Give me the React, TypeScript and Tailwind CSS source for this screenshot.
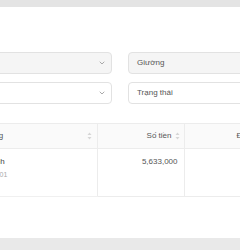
import React from "react";

const Chevron = () => (
  <svg width="6" height="4" viewBox="0 0 6 4" fill="none" className="shrink-0">
    <path d="M1 1l2 2 2-2" stroke="#a0a0a0" strokeWidth="0.9" strokeLinecap="round" strokeLinejoin="round" />
  </svg>
);

const Sort = () => (
  <svg width="5" height="8" viewBox="0 0 5 8" className="shrink-0">
    <path d="M2.5 0.5L4.5 3H0.5Z" fill="#d6d6d6" />
    <path d="M2.5 7.5L0.5 5H4.5Z" fill="#d6d6d6" />
  </svg>
);

export default function App() {
  return (
    <div
      className="w-[240px] h-[250px] overflow-hidden bg-white flex flex-col text-[8px] text-[#555]"
      style={{ fontFamily: '"Liberation Sans", Arial, sans-serif' }}
    >
      <div className="h-[7px] bg-[#e4e4e4] shrink-0" />
      <div className="flex-1 flex flex-col ml-[-80px] w-[400px]">
        <div className="mt-[45px] grid grid-cols-2 gap-x-4 gap-y-2">
          <div className="h-[22px] rounded-[4px] border border-[#e2e2e2] bg-[#f5f5f5] flex items-center justify-end pr-[6px]">
            <Chevron />
          </div>
          <div className="h-[22px] rounded-[4px] border border-[#e2e2e2] bg-[#f5f5f5] flex items-center px-[8px]">
            <span>Giường</span>
          </div>
          <div className="h-[22px] rounded-[4px] border border-[#e2e2e2] bg-white flex items-center justify-end pr-[6px]">
            <Chevron />
          </div>
          <div className="h-[22px] rounded-[4px] border border-[#e2e2e2] bg-white flex items-center px-[8px]">
            <span>Trạng thái</span>
          </div>
        </div>
        <table className="mt-[19px] border-collapse table-fixed w-[400px]">
          <colgroup>
            <col className="w-[177px]" />
            <col className="w-[87px]" />
            <col />
          </colgroup>
          <thead>
            <tr className="h-[25px] bg-[#fafafa]">
              <th className="border-t border-b border-[#ececec] font-normal text-left p-0">
                <div className="flex items-center justify-between pl-[60px] pr-[5px]">
                  <span>Phòng</span>
                  <Sort />
                </div>
              </th>
              <th className="border-t border-b border-l border-[#ececec] font-normal p-0">
                <div className="flex items-center justify-end gap-[3px] pr-[4px]">
                  <span>Số tiền</span>
                  <Sort />
                </div>
              </th>
              <th className="border-t border-b border-l border-[#ececec] font-normal text-left p-0 pl-[52px]">
                Đã thanh toán
              </th>
            </tr>
          </thead>
          <tbody>
            <tr className="h-[48px]">
              <td className="align-top border-b border-[#f0f0f0] pl-[62px] pt-[8px]">
                <div className="text-[#444] leading-[10px]">Thanh</div>
                <div className="text-[7px] text-[#aaa] mt-[3px] leading-[10px]">Mã: 401</div>
              </td>
              <td className="align-top border-b border-l border-[#ececec] text-right pr-[6px] pt-[8px] leading-[10px]">
                5,633,000
              </td>
              <td className="align-top border-b border-l border-[#ececec]" />
            </tr>
          </tbody>
        </table>
        <div className="flex-1" />
      </div>
      <div className="h-[12px] bg-[#e9e9e9] shrink-0" />
    </div>
  );
}
